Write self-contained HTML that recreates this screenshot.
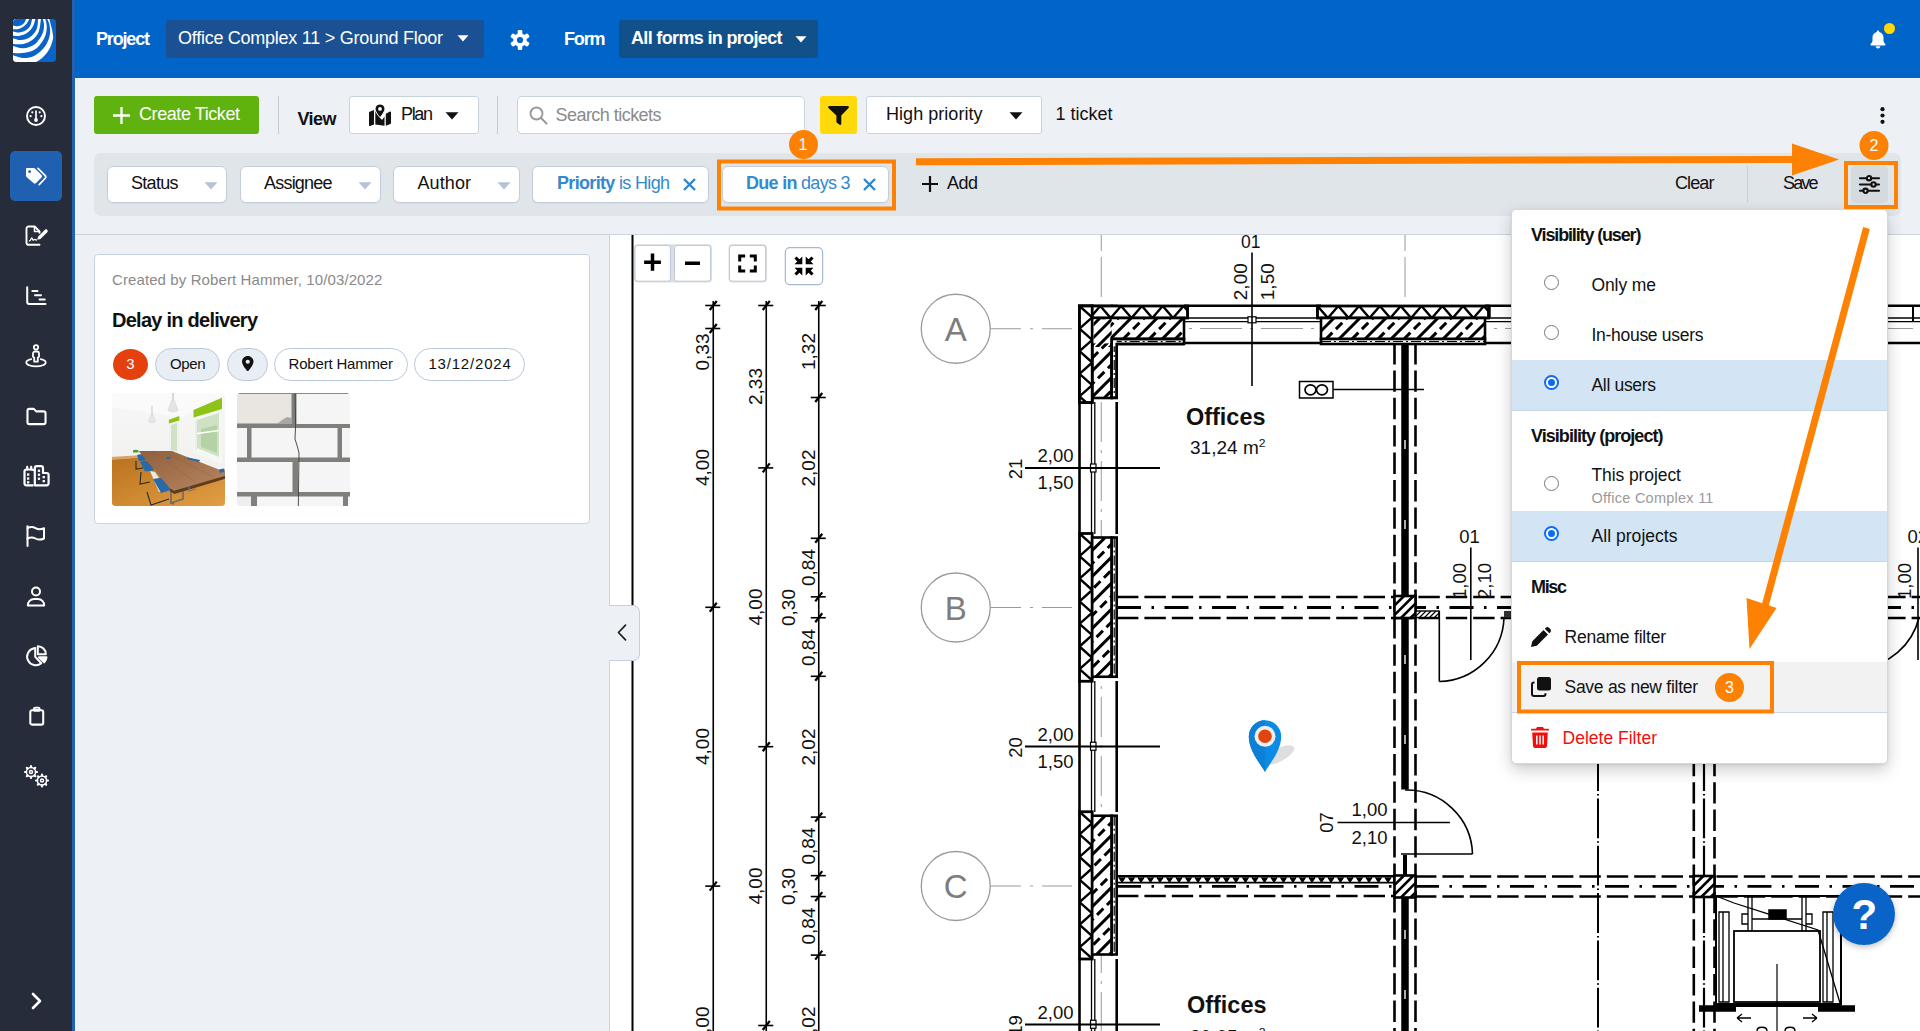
<!DOCTYPE html>
<html lang="en"><head>
<meta charset="utf-8">
<title>Tickets - Office Complex 11</title>
<style>
*{box-sizing:border-box;margin:0;padding:0}
html,body{width:1920px;height:1031px;overflow:hidden;background:#edf1f6}
body{font-family:"Liberation Sans",sans-serif;color:#111;position:relative;font-size:18px}
.abs{position:absolute}
.t{position:absolute;white-space:nowrap;line-height:1;font-size:18px}
.b{font-weight:bold}
svg{position:absolute;overflow:visible}
#sidebar{left:0;top:0;width:75px;height:1031px;background:#262c3a;border-right:3px solid #1f62b6}
#header{left:75px;top:0;width:1845px;height:78px;background:#0064c8}
.hdd{top:20px;height:38px;border-radius:3px}
.btn{background:#fff;border:1px solid #c9d3de;border-radius:3px}
.chip{background:#fff;border:1px solid #c3cedb;border-radius:6px;top:166px;height:37px;box-shadow:0 1px 1px rgba(0,0,0,.04)}
.pill{top:348px;height:33px;border:1px solid #b8c8d9;border-radius:17px;background:#fff}
.or{border:4px solid #fd8204}
.badge{width:29px;height:29px;border-radius:50%;background:#fd8204}
.row{left:1512px;width:375px;height:50px}
.radio{width:15px;height:15px;border-radius:50%;border:1px solid #767676;background:#fff}
.radio.on{border:2px solid #0a6cf5}
.radio.on:after{content:"";position:absolute;left:2px;top:2px;width:7px;height:7px;border-radius:50%;background:#0a6cf5}
</style>
</head>
<body>
<!--SIDEBAR-->
<div id="sidebar" class="abs"></div>
<div class="abs" style="left:10px;top:151px;width:52px;height:50px;border-radius:5px;background:#1f60b0"></div>
<!-- logo -->
<svg style="left:13px;top:19px" width="43" height="43" viewBox="0 0 43 43">
 <defs><clipPath id="lg"><rect x="0" y="0" width="43" height="43" rx="3.500"></rect></clipPath></defs>
 <g clip-path="url(#lg)"><rect width="43" height="43" fill="#0a63c9"></rect>
<path d="M22.57 43.22C25.19 42.01 27.81 40.36 30.13 38.10C32.46 35.84 34.90 32.63 36.53 29.67C38.16 26.71 39.38 22.88 39.91 20.36C40.43 17.84 39.90 16.48 39.67 14.54C39.45 12.60 39.14 11.15 38.57 8.73C38.00 6.30 36.76 1.84 36.24 0.00L36.24 -6L-6 -6L-6 43.22L-6 50L22.57 50Z" fill="#fff"></path>
<path d="M0.00 36.36C2.04 36.91 6.69 39.06 10.35 39.09C14.02 39.12 18.31 38.59 21.99 36.53C25.67 34.48 29.99 30.23 32.46 26.76C34.93 23.29 36.15 19.20 36.82 15.71C37.50 12.22 36.97 8.44 36.53 5.82C36.10 3.20 34.74 1.36 34.21 0.00L34.21 -6L-6 -6L-6 36.36Z" fill="#0a63c9"></path>
<path d="M0.00 34.03C2.23 34.07 7.64 34.63 11.52 33.86C15.40 33.08 19.95 31.87 23.27 29.38C26.59 26.89 29.67 22.35 31.41 18.91C33.16 15.46 33.59 11.88 33.74 8.73C33.90 5.57 32.70 1.84 32.34 0.00L32.34 -6L-6 -6L-6 34.03Z" fill="#fff"></path>
<path d="M0.00 27.05C2.04 27.50 6.71 29.52 10.35 29.20C14.00 28.88 18.69 27.53 21.87 25.13C25.05 22.74 27.91 18.05 29.44 14.83C30.96 11.62 30.94 8.29 31.01 5.82C31.07 3.34 30.13 1.36 29.84 0.00L29.84 -6L-6 -6L-6 27.05Z" fill="#0a63c9"></path>
<path d="M0.00 25.01C2.04 25.07 7.16 25.56 10.35 24.90C13.55 24.24 16.66 23.03 19.20 21.06C21.74 19.09 24.14 16.60 25.60 13.09C27.05 9.58 27.54 2.57 27.92 0.00L27.92 -6L-6 -6L-6 25.01Z" fill="#fff"></path>
<path d="M0.00 19.20C1.65 19.57 5.16 21.27 8.03 21.06C10.90 20.85 14.62 19.73 17.22 17.92C19.82 16.10 22.29 13.17 23.62 10.18C24.95 7.19 24.90 2.08 25.19 0.00L25.19 -6L-6 -6L-6 19.20Z" fill="#0a63c9"></path>
<path d="M0.00 16.87C1.45 16.91 4.54 17.34 6.86 16.87C9.19 16.40 11.81 15.58 13.96 14.08C16.11 12.58 18.39 10.20 19.78 7.85C21.17 5.51 21.82 1.70 22.28 0.00L22.28 -6L-6 -6L-6 16.87Z" fill="#fff"></path>
<path d="M0.00 12.51C1.31 12.70 3.90 13.66 5.99 13.50C8.09 13.33 10.69 12.65 12.57 11.52C14.44 10.38 16.13 8.61 17.22 6.69C18.31 4.77 18.69 1.50 19.08 0.00L19.08 -6L-6 -6L-6 12.51Z" fill="#0a63c9"></path>
<path d="M0.00 10.18C1.16 10.18 3.47 10.36 5.12 10.01C6.77 9.65 8.42 9.00 9.89 8.03C11.36 7.06 12.91 5.53 13.96 4.19C15.01 2.85 15.73 1.09 16.17 0.00L16.17 -6L-6 -6L-6 10.18Z" fill="#fff"></path>
<path d="M0.00 6.52C1.11 6.64 3.32 7.41 4.83 7.27C6.34 7.14 7.91 6.43 9.08 5.70C10.24 4.97 11.16 3.86 11.81 2.91C12.46 1.96 12.68 0.87 12.97 0.00L12.97 -6L-6 -6L-6 6.52Z" fill="#0a63c9"></path>
 </g>
</svg>
<!-- gauge -->
<svg style="left:26px;top:106px" width="20" height="20" viewBox="0 0 20 20" fill="none" stroke="#fff">
 <circle cx="10" cy="10" r="9" stroke-width="1.9"></circle>
 <path d="M10 4.5V14" stroke-width="1.7"></path>
 <circle cx="10" cy="14" r="1.9" fill="#fff" stroke="none"></circle>
 <g fill="#fff" stroke="none"><circle cx="6.3" cy="6.3" r="1.1"></circle><circle cx="13.7" cy="6.3" r="1.1"></circle><circle cx="4.6" cy="10.2" r="1.1"></circle><circle cx="15.4" cy="10.2" r="1.1"></circle></g>
</svg>
<!-- tags -->
<svg style="left:25px;top:166.500px" width="22" height="20" viewBox="0 0 22 20">
 <path d="M1 2.2C1 1.5 1.5 1 2.2 1H8.6c.5 0 1 .2 1.3.5l6.600 6.600c.7.7.7 1.800 0 2.500l-5.500 5.500c-.7.700-1.800.700-2.500 0L1.500 9.900C1.200 9.600 1 9.100 1 8.600z" fill="#fff"></path>
 <circle cx="4.600" cy="4.700" r="1.4" fill="#1f60b0"></circle>
 <path d="M13 1.300l7 7c.9.900.9 2.300 0 3.200l-5.800 6.200" fill="none" stroke="#fff" stroke-width="1.7" stroke-linecap="round"></path>
</svg>
<!-- file signature -->
<svg style="left:25px;top:225px" width="24" height="22" viewBox="0 0 24 22" fill="none" stroke="#fff" stroke-width="1.9" stroke-linejoin="round" stroke-linecap="round">
 <path d="M14.500 19.800H3.500c-1.100 0-2-.9-2-2V3.500c0-1.100.9-2 2-2h6.200l4.800 4.800v1.500"></path>
 <path d="M9.500 1.800v4.700h4.700" stroke-width="1.600"></path>
 <path d="M4.500 15.800c1.200-.2 1.500-2.800 2.300-2.800.8 0 .5 2.200 1.400 2.200.7 0 .8-.9 1.500-.9.500 0 .6.700 1.800.7" stroke-width="1.300"></path>
 <path d="M12.300 14.800l.7-3.100 6.900-6.900c.6-.6 1.600-.6 2.200 0l.2.200c.6.600.6 1.600 0 2.200l-6.900 6.900z" fill="#fff" stroke="none"></path>
</svg>
<!-- gantt -->
<svg style="left:26px;top:286px" width="21" height="20" viewBox="0 0 21 20" fill="none" stroke="#fff" stroke-linecap="round" stroke-linejoin="round">
 <path d="M1.200 1.200v14.800c0 1.100.9 2 2 2h16.300" stroke-width="2"></path>
 <path d="M6.300 5h5.200M9 9.300h6M13.500 13.500h5.300" stroke-width="1.900"></path>
</svg>
<!-- street view -->
<svg style="left:25px;top:344px" width="22" height="24" viewBox="0 0 22 24" fill="none" stroke="#fff" stroke-width="1.800" stroke-linecap="round" stroke-linejoin="round">
 <circle cx="11" cy="3.300" r="2.200"></circle>
 <path d="M8 9.500c0-1.100.9-2 2-2h2c1.100 0 2 .9 2 2v3.300l-1.200.8v4.100h-3.600v-4.100L8 12.800z"></path>
 <path d="M6.200 15.200C3.300 15.900 1.300 17.100 1.300 18.500c0 2.200 4.300 3.900 9.700 3.900s9.700-1.700 9.700-3.900c0-1.400-2-2.600-4.900-3.300"></path>
</svg>
<!-- folder -->
<svg style="left:25.500px;top:406.500px" width="21" height="19" viewBox="0 0 22 20" fill="none" stroke="#fff" stroke-width="2.200" stroke-linejoin="round">
 <path d="M1.500 4c0-1.100.9-2 2-2h4.700l2.500 2.600h7.800c1.100 0 2 .9 2 2v9.400c0 1.100-.9 2-2 2H3.500c-1.100 0-2-.9-2-2z"></path>
</svg>
<!-- buildings -->
<svg style="left:23px;top:465px" width="27" height="22" viewBox="0 0 27 22" fill="none" stroke="#fff" stroke-width="2.200" stroke-linejoin="round">
 <path d="M10.500 20.300H3.500c-1.100 0-2-.9-2-2V6.500c0-1.100.9-2 2-2h5.500c.8 0 1.500.7 1.500 1.500"></path>
 <path d="M4.200 4.500V1.800M8.200 4.500V1.800" stroke-linecap="round"></path>
 <path d="M11.800 20.300V3.200c0-1.100.9-2 2-2h4.200c1.100 0 2 .9 2 2v4.800h3.600c1.100 0 2 .9 2 2v8.300c0 1.100-.9 2-2 2z"></path>
 <g stroke="none" fill="#fff"><rect x="4" y="8.400" width="2.300" height="2.300"></rect><rect x="4" y="12.400" width="2.300" height="2.300"></rect><rect x="4" y="16.200" width="2.300" height="2.300"></rect><rect x="14.800" y="4.600" width="2.300" height="2.300"></rect><rect x="14.800" y="8.600" width="2.300" height="2.300"></rect><rect x="14.800" y="12.600" width="2.300" height="2.300"></rect><rect x="19.600" y="11" width="2.300" height="2.300"></rect><rect x="19.600" y="15" width="2.300" height="2.300"></rect></g>
</svg>
<!-- flag -->
<svg style="left:26px;top:525px" width="20" height="22" viewBox="0 0 20 22" fill="none" stroke="#fff" stroke-width="2" stroke-linecap="round" stroke-linejoin="round">
 <path d="M1.500 1.200V21"></path>
 <path d="M1.500 3.200c3-1.600 5.500-1.400 8 0s5.500 1.400 8.500 0v10.300c-3 1.400-6 1.400-8.500 0s-5-1.600-8 0"></path>
</svg>
<!-- user -->
<svg style="left:26px;top:586px" width="20" height="21" viewBox="0 0 20 21" fill="none" stroke="#fff" stroke-width="2" stroke-linejoin="round">
 <circle cx="10" cy="5.500" r="4"></circle>
 <path d="M1.800 19.500c0-3.600 2.700-6.500 6.200-6.500h4c3.500 0 6.200 2.900 6.200 6.500z"></path>
</svg>
<!-- pie -->
<svg style="left:25px;top:645px" width="23" height="22" viewBox="0 0 23 22" fill="none" stroke="#fff" stroke-width="2" stroke-linejoin="round">
 <path d="M9 3.200A8.600 8.600 0 1 0 16.300 18.200L10.200 11.800V3.100z"></path>
 <path d="M12.800 1.200a8 8 0 0 1 8 8h-8z"></path>
 <path d="M14 12.200h7.500a8 8 0 0 1-2.300 5.200z" fill="#fff"></path>
</svg>
<!-- clipboard -->
<svg style="left:28.500px;top:706px" width="15.500" height="20" viewBox="0 0 18 23" fill="none" stroke="#fff" stroke-width="2" stroke-linejoin="round">
 <rect x="1.500" y="4.800" width="15" height="16.700" rx="2" stroke-width="2.400"></rect>
 <path d="M5.500 4.800V3.500c0-1 .8-1.800 1.800-1.800h3.400c1 0 1.800.8 1.800 1.800v1.300"></path>
 <rect x="5.500" y="3" width="7" height="3.500" fill="#fff" stroke="none"></rect>
</svg>
<!-- gears -->
<svg style="left:23px;top:765px" width="27" height="23" viewBox="0 0 27 23" fill="none" stroke="#fff">
 <g stroke-width="1.500"><circle cx="8" cy="7" r="4.600"></circle><circle cx="8" cy="7" r="1.500"></circle></g>
 <g stroke-width="2.200" stroke-linecap="round"><path d="M8 1v1.200M8 11.800V13M2 7h1.200M12.800 7H14M3.800 2.800l.8.800M11.400 10.400l.8.800M3.800 11.200l.8-.8M11.400 3.600l.8-.8"></path></g>
 <g stroke-width="1.500"><circle cx="19" cy="15.500" r="4.600"></circle><circle cx="19" cy="15.500" r="1.500"></circle></g>
 <g stroke-width="2.200" stroke-linecap="round"><path d="M19 9.500v1.200M19 20.300v1.200M13 15.500h1.200M23.800 15.500H25M14.800 11.300l.8.800M22.400 18.900l.8.800M14.800 19.700l.8-.8M22.400 12.100l.8-.8"></path></g>
</svg>
<!-- chevron -->
<svg style="left:31px;top:992px" width="11" height="18" viewBox="0 0 11 18" fill="none" stroke="#fff" stroke-width="2.600" stroke-linecap="round" stroke-linejoin="round"><path d="M2 2l7 7-7 7"></path></svg>
<!--/SIDEBAR-->
<!--HEADER-->
<div id="header" class="abs"></div>
<span class="t b" style="left: 96px; color: rgb(255, 255, 255); letter-spacing: -1.17px; top: 29.5px;">Project</span>
<div class="abs hdd" style="left:166px;width:318px;background:#1b5193"></div>
<span class="t" style="left: 178px; color: rgb(255, 255, 255); letter-spacing: -0.26px; top: 29px;">Office Complex 11 &gt; Ground Floor</span>
<svg style="left:457px;top:35px" width="12" height="7" viewBox="0 0 12 7"><path d="M.5.300h11L6 6.500z" fill="#fff"></path></svg>
<!-- gear -->
<svg style="left:510px;top:30px" width="20" height="20" viewBox="0 0 20 20">
 <g fill="#fff"><circle cx="10" cy="10" r="6.800"></circle>
 <rect x="7.700" y="0" width="4.600" height="20" rx="1.300"></rect>
 <rect x="7.700" y="0" width="4.600" height="20" rx="1.300" transform="rotate(60 10 10)"></rect><rect x="7.700" y="0" width="4.600" height="20" rx="1.300" transform="rotate(120 10 10)"></rect></g>
 <circle cx="10" cy="10" r="3.100" fill="#0064c8"></circle>
</svg>
<span class="t b" style="left: 564px; color: rgb(255, 255, 255); letter-spacing: -1.17px; top: 29.5px;">Form</span>
<div class="abs hdd" style="left:619px;width:199px;background:#12508a"></div>
<span class="t b" style="left: 631px; color: rgb(255, 255, 255); letter-spacing: -0.66px; top: 28.5px;">All forms in project</span>
<svg style="left:795px;top:36px" width="12" height="7" viewBox="0 0 12 7"><path d="M.5.300h11L6 6.500z" fill="#fff"></path></svg>
<!-- bell -->
<svg style="left:1869px;top:30px" width="18" height="19" viewBox="0 0 18 19">
 <path d="M9 .500c.7 0 1.200.5 1.200 1.200v.4c2.600.6 4.300 2.800 4.300 5.500v2.600c0 1.300.5 2.400 1.400 3.300l.4.400c.5.500.2 1.500-.6 1.500H2.300c-.8 0-1.100-1-.6-1.500l.4-.4c.9-.9 1.400-2 1.400-3.300V7.600c0-2.700 1.700-4.900 4.300-5.500v-.4C7.800 1 8.300.5 9 .5z" fill="#fff"></path>
 <path d="M6.700 16.300h4.600c0 1.300-1 2.200-2.300 2.200s-2.300-.9-2.300-2.200z" fill="#fff"></path>
</svg>
<div class="abs" style="left:1884px;top:23px;width:11px;height:11px;border-radius:50%;background:#ffd70a"></div>
<!--/HEADER-->
<!--TOOLBAR-->
<div class="abs" style="left:75px;top:234px;width:1845px;height:1px;background:#cbd5e0"></div>
<div class="abs" style="left:94px;top:96px;width:165px;height:38px;border-radius:3px;background:#60b30e"></div>
<svg style="left:113px;top:107px" width="17" height="17" viewBox="0 0 17 17"><path d="M8.500 0v17M0 8.500h17" stroke="#fff" stroke-width="2.300"></path></svg>
<span class="t" style="left: 139px; color: rgb(255, 255, 255); letter-spacing: -0.42px; top: 105px;">Create Ticket</span>
<div class="abs" style="left:278px;top:96px;width:1px;height:38px;background:#c3ccd6"></div>
<span class="t b" style="left: 297.5px; letter-spacing: -0.57px; top: 110px;">View</span>
<div class="abs btn" style="left:349px;top:96px;width:130px;height:38px"></div>
<!-- map marked icon -->
<svg style="left:368px;top:104px" width="24" height="22" viewBox="0 0 24 22">
 <path d="M1 8.600c0-.4.200-.8.600-.9L6 6v14.500l-4 1.500c-.5.200-1-.2-1-.7zM7.300 6.500V20.500l9.200 1.300V12.500l-.4.600c-.4.700-.8 1.300-1.200 1.800-.5.700-1.500.7-2 0-.8-1.100-2-2.700-2.800-4.200-.4-.700-.700-1.400-.900-2zM17.800 9.800v12l4.600-1.800c.4-.1.600-.5.600-.9V8.200c0-.5-.5-.9-1-.7z" fill="#111"></path>
 <path d="M12 0C9.200 0 7 2.200 7 4.900c0 2.200 2.900 6.200 4.300 7.900.4.500 1 .5 1.400 0C14.100 11.100 17 7.100 17 4.900 17 2.200 14.800 0 12 0z" fill="#111" stroke="#fff" stroke-width="1"></path>
 <circle cx="12" cy="4.900" r="1.900" fill="#fff"></circle>
</svg>
<span class="t" style="left: 401px; letter-spacing: -1.34px; top: 105px;">Plan</span>
<svg style="left:445px;top:112px" width="14" height="8" viewBox="0 0 14 8"><path d="M.5.300h13L7 7.500z" fill="#111"></path></svg>
<div class="abs" style="left:497px;top:96px;width:1px;height:38px;background:#c3ccd6"></div>
<div class="abs btn" style="left:517px;top:96px;width:288px;height:38px;border-radius:5px"></div>
<svg style="left:529px;top:106px" width="19" height="19" viewBox="0 0 19 19" fill="none" stroke="#999" stroke-width="1.900" stroke-linecap="round"><circle cx="7.500" cy="7.500" r="6"></circle><path d="M12 12l5.500 5.500"></path></svg>
<span class="t" style="left: 555.5px; color: rgb(139, 139, 139); letter-spacing: -0.54px; top: 105.5px;">Search tickets</span>
<div class="abs" style="left:820px;top:96px;width:37px;height:38px;border-radius:3px;background:#ffd90a"></div>
<svg style="left:828px;top:106px" width="21" height="19" viewBox="0 0 21 19"><path d="M1.200 0h18.600c1 0 1.500 1.200.8 1.900l-7.300 7.600v8.300c0 .9-1 1.400-1.700.9l-2.700-2c-.3-.2-.5-.6-.5-.9V9.500L.4 1.900C-.3 1.200.2 0 1.200 0z" fill="#111"></path></svg>
<div class="abs btn" style="left:866px;top:96px;width:176px;height:38px"></div>
<span class="t" style="left: 886px; letter-spacing: 0.04px; top: 105px;">High priority</span>
<svg style="left:1009px;top:112px" width="14" height="8" viewBox="0 0 14 8"><path d="M.5.300h13L7 7.500z" fill="#111"></path></svg>
<span class="t" style="left: 1055.5px; letter-spacing: 0px; top: 105px;">1 ticket</span>
<svg style="left:1880px;top:107px" width="5" height="17" viewBox="0 0 5 17" fill="#111"><circle cx="2.500" cy="2.200" r="2.100"></circle><circle cx="2.500" cy="8.500" r="2.100"></circle><circle cx="2.500" cy="14.800" r="2.100"></circle></svg>
<!--/TOOLBAR-->
<!--FILTERBAR-->
<div class="abs" style="left:94px;top:153px;width:1807px;height:63px;border-radius:7px;background:#e0e5ea"></div>
<div class="abs chip" style="left:107px;width:120px"></div>
<span class="t" style="left: 131px; letter-spacing: -0.71px; top: 174px;">Status</span>
<svg style="left:204px;top:182px" width="14" height="8" viewBox="0 0 14 8"><path d="M.5.300h13L7 7.500z" fill="#b4c3d6"></path></svg>
<div class="abs chip" style="left:240px;width:141px"></div>
<span class="t" style="left: 264px; letter-spacing: -0.79px; top: 174px;">Assignee</span>
<svg style="left:358px;top:182px" width="14" height="8" viewBox="0 0 14 8"><path d="M.5.300h13L7 7.500z" fill="#b4c3d6"></path></svg>
<div class="abs chip" style="left:393px;width:127px"></div>
<span class="t" style="left: 417.5px; letter-spacing: 0.09px; top: 174px;">Author</span>
<svg style="left:497px;top:182px" width="14" height="8" viewBox="0 0 14 8"><path d="M.5.300h13L7 7.500z" fill="#b4c3d6"></path></svg>
<div class="abs chip" style="left:532px;width:177px"></div>
<span class="t" style="left: 557px; color: rgb(51, 137, 205); letter-spacing: -0.67px; top: 174px;"><b>Priority</b> is High</span>
<svg style="left:683px;top:178px" width="13" height="13" viewBox="0 0 13 13"><path d="M1 1l11 11M12 1L1 12" stroke="#2f86cc" stroke-width="2.400"></path></svg>
<div class="abs chip" style="left:722px;width:167px"></div>
<span class="t" style="left: 746px; color: rgb(51, 137, 205); letter-spacing: -0.71px; top: 174px;"><b>Due in</b> days 3</span>
<svg style="left:863px;top:178px" width="13" height="13" viewBox="0 0 13 13"><path d="M1 1l11 11M12 1L1 12" stroke="#2f86cc" stroke-width="2.400"></path></svg>
<svg style="left:922px;top:176px" width="16" height="16" viewBox="0 0 16 16"><path d="M8 0v16M0 8h16" stroke="#111" stroke-width="2.200"></path></svg>
<span class="t" style="left: 947px; letter-spacing: -0.52px; top: 174px;">Add</span>
<span class="t" style="left: 1675px; letter-spacing: -0.88px; top: 174px;">Clear</span>
<div class="abs" style="left:1747px;top:166px;width:1px;height:37px;background:#c7cfd8"></div>
<span class="t" style="left: 1783px; letter-spacing: -1.84px; top: 174px;">Save</span>
<div class="abs" style="left:1851px;top:166px;width:37px;height:37px;border-radius:4px;background:#d5dade"></div>
<!-- sliders icon -->
<svg style="left:1859px;top:175px" width="21" height="19" viewBox="0 0 21 19" fill="none" stroke="#111" stroke-width="2.100" stroke-linecap="round">
 <path d="M1 3.200h6.800M12.300 3.200H20M1 9.500h11.300M16.800 9.500H20M1 15.800h3.300M8.800 15.800H20"></path>
 <circle cx="10" cy="3.200" r="2.200"></circle><circle cx="14.500" cy="9.500" r="2.200"></circle><circle cx="6.500" cy="15.800" r="2.200"></circle>
</svg>
<!--/FILTERBAR-->
<!--CARD-->
<div class="abs" style="left:609px;top:235px;width:1px;height:796px;background:#c9d4e0"></div>
<div class="abs" style="left:94px;top:254px;width:496px;height:270px;background:#fff;border:1px solid #c7d3df;border-radius:4px"></div>
<span class="t" style="left: 112px; font-size: 15px; color: rgb(138, 138, 138); letter-spacing: 0.1px; top: 272px;">Created by Robert Hammer, 10/03/2022</span>
<span class="t b" style="left: 112px; font-size: 20px; letter-spacing: -0.74px; top: 310px;">Delay in delivery</span>
<div class="abs" style="left:113px;top:349px;width:35px;height:31px;border-radius:50%;background:#e5410e"></div>
<span class="t" style="left: 126.3px; font-size: 15px; color: rgb(255, 255, 255); top: 356px;">3</span>
<div class="abs pill" style="left:155px;width:65px;background:#e9eef4"></div>
<span class="t" style="left: 170px; font-size: 15px; letter-spacing: -0.33px; top: 355.7px;">Open</span>
<div class="abs pill" style="left:227px;width:41px;background:#e9eef4"></div>
<svg style="left:242px;top:355.500px" width="11.500" height="15.500" viewBox="0 0 12 16"><path d="M6 0C2.700 0 0 2.600 0 5.900c0 2.600 3.500 7.300 5.100 9.300.5.600 1.300.6 1.800 0C8.500 13.200 12 8.500 12 5.900 12 2.600 9.300 0 6 0z" fill="#111"></path><circle cx="6" cy="5.900" r="2.200" fill="#e9eef4"></circle></svg>
<div class="abs pill" style="left:274px;width:134px"></div>
<span class="t" style="left: 288.5px; font-size: 15px; letter-spacing: -0.18px; top: 355.7px;">Robert Hammer</span>
<div class="abs pill" style="left:413.500px;width:111px"></div>
<span class="t" style="left: 428.4px; font-size: 15px; letter-spacing: 0.82px; top: 355.7px;">13/12/2024</span>
<!-- photo 1 -->
<svg style="left:112px;top:393px" width="113" height="113" viewBox="0 0 113 113">
 <defs><clipPath id="ph"><rect width="113" height="113" rx="3.500"></rect></clipPath>
 <filter id="bl" x="-5%" y="-5%" width="110%" height="110%"><feGaussianBlur stdDeviation=".450"></feGaussianBlur></filter>
 <linearGradient id="fl" x1="0" y1="0" x2="1" y2="1"><stop offset="0" stop-color="#b9701f"></stop><stop offset=".500" stop-color="#cf8a30"></stop><stop offset="1" stop-color="#e3a047"></stop></linearGradient>
 <linearGradient id="tb" x1="0" y1="0" x2="1" y2="1"><stop offset="0" stop-color="#8f5f3c"></stop><stop offset="1" stop-color="#b98761"></stop></linearGradient>
 <linearGradient id="wl" x1="0" y1="0" x2="0" y2="1"><stop offset="0" stop-color="#f7f7f7"></stop><stop offset="1" stop-color="#eeeeec"></stop></linearGradient></defs>
 <g clip-path="url(#ph)"><g filter="url(#bl)">
  <rect x="-3" y="-3" width="119" height="119" fill="url(#wl)"></rect>
  <path d="M-3 14L70 24 116-2V-3H-3z" fill="#fafafa"></path>
  <path d="M-3 66.500L27 64.500 58 66 116 88V116H-3z" fill="url(#fl)"></path>
  <path d="M-3 64L27 62.300V64.700L-3 67z" fill="#d5a468"></path>
  <path d="M98 82l18 8v-5l-18-7z" fill="#d5a468"></path>
  <path d="M81.500 24l28.500-9v56l-28.500-12z" fill="#f4f7f2"></path>
  <path d="M85 27l22-7v44L85 55z" fill="#cfe2c6"></path><path d="M89 36l16-4v28l-16-6z" fill="#b4d2a6"></path>
  <path d="M85 40.500l22-3" stroke="#fff" stroke-width="1.300"></path><path d="M84 27v30" stroke="#e9ece8" stroke-width="2"></path>
  <path d="M81.500 17L110 4.700V16L81.500 24.400z" fill="#8bc419"></path>
  <path d="M57 31l10-3.500v33L57 59z" fill="#eef2ec"></path><path d="M59 32l6-2v28l-6-1z" fill="#cfe2c6"></path>
  <path d="M56.900 26.800L67.300 23v4.400L56.900 30.500z" fill="#8bc419"></path>
  <path d="M61 -2V8" stroke="#999" stroke-width=".700"></path><path d="M59.500 7.500h3l3.500 9.500c0 2.500-10 2.500-10 0z" fill="#e4e4e4" stroke="#cfcfcf" stroke-width=".400"></path>
  <path d="M40 13v9" stroke="#aaa" stroke-width=".600"></path><path d="M39 21.500h2l2.500 7c0 1.500-7 1.500-7 0z" fill="#e6e6e6" stroke="#d2d2d2" stroke-width=".400"></path>
  <path d="M21 57.500c1.500-1 4-1 5.500 0v2h-5.500z" fill="#4f9a2a"></path>
  <path d="M25 62c2-1 6-1 8 .5l1 5-7 .5zM28 69c3-1.500 8-1.500 11 .5l3 8-9 1z" fill="#2c69a8"></path>
  <path d="M38 78l5 1 12 18-8 2z" fill="#e9e9e6"></path><path d="M41 86l12-2 10 12-14 4z" fill="#2c69a8"></path>
  <path d="M24 68v8l7-1M29 79l-1 12 10-2M35 99l4 13 18-6" stroke="#2a2a2a" stroke-width="1.100" fill="none"></path>
  <path d="M26.700 58H60L116 80.200V82L62 97.800 58 95.500z" fill="url(#tb)"></path>
  <path d="M58 95.500l4 2.300L116 82v3L62.500 101 58 98.500z" fill="#5e3b22"></path>
  <path d="M40 58l42 30M50 58l52 26" stroke="#8a5a38" stroke-width=".500" opacity=".600"></path>
  <path d="M59 99v11l12-4v-8M59 110l3 1" stroke="#6a6a6a" stroke-width="1.600" fill="none"></path>
  <path d="M77 93v5l7-2" stroke="#777" stroke-width="1.200" fill="none"></path>
  <path d="M54 64.500c1.500-1 4-.800 5 0l-.500 1.500h-4z" fill="#2d6c9e"></path>
  <path d="M76 64.500l12 2.500-1 2-12-3zM107 76.500l5-1 1 3-5 1.500z" fill="#2c69a8"></path>
 </g></g>
</svg>
<!-- photo 2 -->
<svg style="left:237px;top:393px" width="113" height="113" viewBox="0 0 113 113">
 <defs><filter id="bl2" x="-5%" y="-5%" width="110%" height="110%"><feGaussianBlur stdDeviation=".300"></feGaussianBlur></filter></defs>
 <g clip-path="url(#ph)"><g filter="url(#bl2)">
  <rect x="-3" y="-3" width="119" height="119" fill="#7f7f7b"></rect>
  <g fill="#f5f5f5">
   <rect x="-3" y="1" width="57.500" height="29.500" fill="#e9e6e1"></rect><rect x="59.500" y="1" width="57" height="30"></rect>
   <rect x="-3" y="35" width="13" height="29.500"></rect><rect x="14.500" y="35" width="86" height="29.500"></rect><rect x="105" y="35" width="11" height="29.500"></rect>
   <rect x="-3" y="69" width="58.500" height="30"></rect><rect x="61" y="69" width="55" height="30"></rect>
   <rect x="-3" y="103.500" width="17" height="12" fill="#eee"></rect><rect x="20" y="103.500" width="86" height="12"></rect><rect x="111" y="103.500" width="5" height="12"></rect>
  </g>
  <path d="M45 27l5-3 5 1v6H40z" fill="#a9a8a4"></path>
  <path d="M-3 0h119" stroke="#8d8d89" stroke-width="1.500"></path>
  <path d="M58 -1l.600 33.500L58 46l2.500 8 1.500 6-.700 53" stroke="#3c3c3c" stroke-width=".900" fill="none"></path>
 </g></g>
</svg>
<!--/CARD-->
<!--PLAN-->
<svg style="left:0;top:0" width="1920" height="1031" viewBox="0 0 1920 1031" fill="none" font-family="Liberation Sans, sans-serif">
<defs><clipPath id="pc"><rect x="610" y="235" width="1310" height="796"></rect></clipPath></defs>
<rect x="610" y="235" width="1310" height="796" fill="#fff"></rect>
<g clip-path="url(#pc)">
<path d="M632.5 235L632.5 1031" stroke="#000" stroke-width="2"></path>
<path d="M713.25 301L713.25 1031" stroke="#000" stroke-width="1.6"></path>
<path d="M705.25 305.5L720.25 305.5" stroke="#000" stroke-width="1.6"></path>
<path d="M709.75 310L716.75 301" stroke="#000" stroke-width="2.2"></path>
<path d="M705.25 328.5L720.25 328.5" stroke="#000" stroke-width="1.6"></path>
<path d="M709.75 333L716.75 324" stroke="#000" stroke-width="2.2"></path>
<path d="M705.25 607.3L720.25 607.3" stroke="#000" stroke-width="1.6"></path>
<path d="M709.75 611.8L716.75 602.8" stroke="#000" stroke-width="2.2"></path>
<path d="M705.25 886.1L720.25 886.1" stroke="#000" stroke-width="1.6"></path>
<path d="M709.75 890.6L716.75 881.6" stroke="#000" stroke-width="2.2"></path>
<path d="M766.25 301L766.25 1031" stroke="#000" stroke-width="1.6"></path>
<path d="M758.25 305.5L773.25 305.5" stroke="#000" stroke-width="1.6"></path>
<path d="M762.75 310L769.75 301" stroke="#000" stroke-width="2.2"></path>
<path d="M758.25 467.9L773.25 467.9" stroke="#000" stroke-width="1.6"></path>
<path d="M762.75 472.4L769.75 463.4" stroke="#000" stroke-width="2.2"></path>
<path d="M758.25 746.7L773.25 746.7" stroke="#000" stroke-width="1.6"></path>
<path d="M762.75 751.2L769.75 742.2" stroke="#000" stroke-width="2.2"></path>
<path d="M758.25 1025.5L773.25 1025.5" stroke="#000" stroke-width="1.6"></path>
<path d="M762.75 1030L769.75 1021" stroke="#000" stroke-width="2.2"></path>
<path d="M818.75 301L818.75 1031" stroke="#000" stroke-width="1.6"></path>
<path d="M810.75 305.5L825.75 305.5" stroke="#000" stroke-width="1.6"></path>
<path d="M815.25 310L822.25 301" stroke="#000" stroke-width="2.2"></path>
<path d="M810.75 397.5L825.75 397.5" stroke="#000" stroke-width="1.6"></path>
<path d="M815.25 402L822.25 393" stroke="#000" stroke-width="2.2"></path>
<path d="M810.75 538.3L825.75 538.3" stroke="#000" stroke-width="1.6"></path>
<path d="M815.25 542.8L822.25 533.8" stroke="#000" stroke-width="2.2"></path>
<path d="M810.75 596.85L825.75 596.85" stroke="#000" stroke-width="1.6"></path>
<path d="M815.25 601.35L822.25 592.35" stroke="#000" stroke-width="2.2"></path>
<path d="M810.75 617.76L825.75 617.76" stroke="#000" stroke-width="1.6"></path>
<path d="M815.25 622.26L822.25 613.26" stroke="#000" stroke-width="2.2"></path>
<path d="M810.75 676.3L825.75 676.3" stroke="#000" stroke-width="1.6"></path>
<path d="M815.25 680.8L822.25 671.8" stroke="#000" stroke-width="2.2"></path>
<path d="M810.75 817.1L825.75 817.1" stroke="#000" stroke-width="1.6"></path>
<path d="M815.25 821.6L822.25 812.6" stroke="#000" stroke-width="2.2"></path>
<path d="M810.75 875.65L825.75 875.65" stroke="#000" stroke-width="1.6"></path>
<path d="M815.25 880.15L822.25 871.15" stroke="#000" stroke-width="2.2"></path>
<path d="M810.75 896.56L825.75 896.56" stroke="#000" stroke-width="1.6"></path>
<path d="M815.25 901.06L822.25 892.06" stroke="#000" stroke-width="2.2"></path>
<path d="M810.75 955.1L825.75 955.1" stroke="#000" stroke-width="1.6"></path>
<path d="M815.25 959.6L822.25 950.6" stroke="#000" stroke-width="2.2"></path>
<path d="M810.75 1095.9L825.75 1095.9" stroke="#000" stroke-width="1.6"></path>
<path d="M815.25 1100.4L822.25 1091.4" stroke="#000" stroke-width="2.2"></path>
<text x="709" y="352" font-size="19" text-anchor="middle" fill="#111" transform="rotate(-90 709 352)">0,33</text>
<text x="709" y="467.5" font-size="19" text-anchor="middle" fill="#111" transform="rotate(-90 709 467.5)">4,00</text>
<text x="709" y="746.5" font-size="19" text-anchor="middle" fill="#111" transform="rotate(-90 709 746.5)">4,00</text>
<text x="709" y="1025" font-size="19" text-anchor="middle" fill="#111" transform="rotate(-90 709 1025)">4,00</text>
<text x="762" y="386.5" font-size="19" text-anchor="middle" fill="#111" transform="rotate(-90 762 386.5)">2,33</text>
<text x="762" y="607" font-size="19" text-anchor="middle" fill="#111" transform="rotate(-90 762 607)">4,00</text>
<text x="762" y="886" font-size="19" text-anchor="middle" fill="#111" transform="rotate(-90 762 886)">4,00</text>
<text x="814.5" y="351.5" font-size="19" text-anchor="middle" fill="#111" transform="rotate(-90 814.5 351.5)">1,32</text>
<text x="814.5" y="468" font-size="19" text-anchor="middle" fill="#111" transform="rotate(-90 814.5 468)">2,02</text>
<text x="814.5" y="567.5" font-size="19" text-anchor="middle" fill="#111" transform="rotate(-90 814.5 567.5)">0,84</text>
<text x="795" y="607.5" font-size="19" text-anchor="middle" fill="#111" transform="rotate(-90 795 607.5)">0,30</text>
<text x="814.5" y="647.5" font-size="19" text-anchor="middle" fill="#111" transform="rotate(-90 814.5 647.5)">0,84</text>
<text x="814.5" y="747" font-size="19" text-anchor="middle" fill="#111" transform="rotate(-90 814.5 747)">2,02</text>
<text x="814.5" y="846" font-size="19" text-anchor="middle" fill="#111" transform="rotate(-90 814.5 846)">0,84</text>
<text x="795" y="886.5" font-size="19" text-anchor="middle" fill="#111" transform="rotate(-90 795 886.5)">0,30</text>
<text x="814.5" y="926" font-size="19" text-anchor="middle" fill="#111" transform="rotate(-90 814.5 926)">0,84</text>
<text x="814.5" y="1025" font-size="19" text-anchor="middle" fill="#111" transform="rotate(-90 814.5 1025)">2,02</text>
<circle cx="955.75" cy="328.75" r="34.5" stroke="#9a9a9a" stroke-width="1.3" fill="#fff"></circle>
<text x="955.75" y="340.75" font-size="33" text-anchor="middle" fill="#7d7d7d">A</text>
<path d="M991 328.75L1078 328.75" stroke="#9a9a9a" stroke-width="1" stroke-dasharray="30 9 3 9"></path>
<circle cx="955.75" cy="607.5" r="34.5" stroke="#9a9a9a" stroke-width="1.3" fill="#fff"></circle>
<text x="955.75" y="619.5" font-size="33" text-anchor="middle" fill="#7d7d7d">B</text>
<path d="M991 607.5L1078 607.5" stroke="#9a9a9a" stroke-width="1" stroke-dasharray="30 9 3 9"></path>
<circle cx="955.75" cy="886" r="34.5" stroke="#9a9a9a" stroke-width="1.3" fill="#fff"></circle>
<text x="955.75" y="898" font-size="33" text-anchor="middle" fill="#7d7d7d">C</text>
<path d="M991 886L1078 886" stroke="#9a9a9a" stroke-width="1" stroke-dasharray="30 9 3 9"></path>
<path d="M1078 328.5L1920 328.5" stroke="#9a9a9a" stroke-width="1" stroke-dasharray="42 8 3 8"></path>
<path d="M1101.25 235L1101.25 306" stroke="#9a9a9a" stroke-width="1" stroke-dasharray="16 6 40 8 3 8"></path>
<path d="M1405 235L1405 306" stroke="#9a9a9a" stroke-width="1" stroke-dasharray="16 6 40 8 3 8"></path>
<path d="M1101.25 402L1101.25 1031" stroke="#9a9a9a" stroke-width="1" stroke-dasharray="40 8 3 8"></path>
<path d="M1079.5 402L1079.5 534" stroke="#000" stroke-width="2.6"></path>
<path d="M1091.5 402L1091.5 534" stroke="#000" stroke-width="1.3"></path>
<path d="M1094.8 402L1094.8 534" stroke="#000" stroke-width="1.3"></path>
<path d="M1116.7 402L1116.7 534" stroke="#000" stroke-width="2.6"></path>
<path d="M1079.5 681L1079.5 812" stroke="#000" stroke-width="2.6"></path>
<path d="M1091.5 681L1091.5 812" stroke="#000" stroke-width="1.3"></path>
<path d="M1094.8 681L1094.8 812" stroke="#000" stroke-width="1.3"></path>
<path d="M1116.7 681L1116.7 812" stroke="#000" stroke-width="2.6"></path>
<path d="M1079.5 959L1079.5 1040" stroke="#000" stroke-width="2.6"></path>
<path d="M1091.5 959L1091.5 1040" stroke="#000" stroke-width="1.3"></path>
<path d="M1094.8 959L1094.8 1040" stroke="#000" stroke-width="1.3"></path>
<path d="M1116.7 959L1116.7 1040" stroke="#000" stroke-width="2.6"></path>
<rect x="1090.5" y="464" width="5.5" height="8" fill="#fff" stroke="#000" stroke-width="1.2"></rect>
<rect x="1090.5" y="742.25" width="5.5" height="8" fill="#fff" stroke="#000" stroke-width="1.2"></rect>
<rect x="1090.5" y="1020.25" width="5.5" height="8" fill="#fff" stroke="#000" stroke-width="1.2"></rect>
<path d="M1184 305.7L1321 305.7" stroke="#000" stroke-width="2.4"></path>
<path d="M1184 318L1321 318" stroke="#000" stroke-width="1.3"></path>
<path d="M1184 321.6L1321 321.6" stroke="#000" stroke-width="1.3"></path>
<path d="M1184 343L1321 343" stroke="#000" stroke-width="2.6"></path>
<path d="M1485 305.7L1920 305.7" stroke="#000" stroke-width="2.4"></path>
<path d="M1485 318L1920 318" stroke="#000" stroke-width="1.3"></path>
<path d="M1485 321.6L1920 321.6" stroke="#000" stroke-width="1.3"></path>
<path d="M1485 343L1920 343" stroke="#000" stroke-width="2.6"></path>
<rect x="1248" y="316.800" width="8" height="6" fill="#fff" stroke="#000" stroke-width="1.2"></rect>
<path d="M1187.5 306L1187.5 318" stroke="#000" stroke-width="2.4"></path>
<path d="M1317.5 306L1317.5 318" stroke="#000" stroke-width="2.4"></path>
<path d="M1489.5 306L1489.5 318" stroke="#000" stroke-width="2.4"></path>
<path d="M1913 306L1913 321" stroke="#000" stroke-width="2"></path>
<rect x="1079.5" y="306" width="12.7" height="96.5" fill="#fff"></rect>
<clipPath id="c1"><rect x="1079.5" y="306" width="12.7" height="96.5"></rect></clipPath><g clip-path="url(#c1)">
<path d="M1079.5 306L1092.2 317.3L1079.5 328.6L1092.2 339.9L1079.5 351.2L1092.2 362.5L1079.5 373.8L1092.2 385.1L1079.5 396.4L1092.2 407.7L1079.5 419" stroke="#000" stroke-width="2.4" stroke-linejoin="miter"></path>
</g>
<rect x="1079.5" y="306" width="12.7" height="96.5" stroke="#000" stroke-width="2.8"></rect>
<rect x="1092.2" y="306" width="19.5" height="92" fill="#fff"></rect>
<clipPath id="c2"><rect x="1092.2" y="306" width="19.5" height="92"></rect></clipPath><g clip-path="url(#c2)">
<path d="M987.2 398L1079.2 306M1013.2 398L1105.2 306M1039.2 398L1131.2 306M1065.2 398L1157.2 306M1091.2 398L1183.2 306M1117.2 398L1209.2 306" stroke="#000" stroke-width="3"></path>
<path d="M1000.2 398L1092.2 306M1026.2 398L1118.2 306M1052.2 398L1144.2 306M1078.2 398L1170.2 306M1104.2 398L1196.2 306" stroke="#000" stroke-width="3" stroke-dasharray="9 5"></path>
</g>
<rect x="1092.2" y="306" width="19.5" height="92" stroke="#000" stroke-width="2.6"></rect>
<rect x="1111.700" y="306" width="5" height="92" fill="#fff" stroke="#000" stroke-width="2.600"></rect>
<path d="M1114.2 306L1114.2 398" stroke="#000" stroke-width="1.2" stroke-dasharray="10 3 2 3"></path>
<rect x="1079.5" y="533.5" width="12.7" height="147.75" fill="#fff"></rect>
<clipPath id="c3"><rect x="1079.5" y="533.5" width="12.7" height="147.75"></rect></clipPath><g clip-path="url(#c3)">
<path d="M1079.5 533.5L1092.2 544.8L1079.5 556.1L1092.2 567.4L1079.5 578.7L1092.2 590L1079.5 601.3L1092.2 612.6L1079.5 623.9L1092.2 635.2L1079.5 646.5L1092.2 657.8L1079.5 669.1L1092.2 680.4L1079.5 691.7L1092.2 703" stroke="#000" stroke-width="2.4" stroke-linejoin="miter"></path>
</g>
<rect x="1079.5" y="533.5" width="12.7" height="147.75" stroke="#000" stroke-width="2.8"></rect>
<rect x="1092.2" y="537.5" width="19.5" height="139.25" fill="#fff"></rect>
<clipPath id="c4"><rect x="1092.2" y="537.5" width="19.5" height="139.25"></rect></clipPath><g clip-path="url(#c4)">
<path d="M939.95 676.75L1079.2 537.5M965.95 676.75L1105.2 537.5M991.95 676.75L1131.2 537.5M1017.95 676.75L1157.2 537.5M1043.95 676.75L1183.2 537.5M1069.95 676.75L1209.2 537.5M1095.95 676.75L1235.2 537.5M1121.95 676.75L1261.2 537.5" stroke="#000" stroke-width="3"></path>
<path d="M952.95 676.75L1092.2 537.5M978.95 676.75L1118.2 537.5M1004.95 676.75L1144.2 537.5M1030.95 676.75L1170.2 537.5M1056.95 676.75L1196.2 537.5M1082.95 676.75L1222.2 537.5M1108.95 676.75L1248.2 537.5" stroke="#000" stroke-width="3" stroke-dasharray="9 5"></path>
</g>
<rect x="1092.2" y="537.5" width="19.5" height="139.25" stroke="#000" stroke-width="2.6"></rect>
<rect x="1111.700" y="537.5" width="5" height="139.25" fill="#fff" stroke="#000" stroke-width="2.600"></rect>
<path d="M1114.2 537.5L1114.2 676.75" stroke="#000" stroke-width="1.2" stroke-dasharray="10 3 2 3"></path>
<rect x="1079.5" y="811.75" width="12.7" height="147.25" fill="#fff"></rect>
<clipPath id="c5"><rect x="1079.5" y="811.75" width="12.7" height="147.25"></rect></clipPath><g clip-path="url(#c5)">
<path d="M1079.5 811.75L1092.2 823.05L1079.5 834.35L1092.2 845.65L1079.5 856.95L1092.2 868.25L1079.5 879.55L1092.2 890.85L1079.5 902.15L1092.2 913.45L1079.5 924.75L1092.2 936.05L1079.5 947.35L1092.2 958.65L1079.5 969.95L1092.2 981.25" stroke="#000" stroke-width="2.4" stroke-linejoin="miter"></path>
</g>
<rect x="1079.5" y="811.75" width="12.7" height="147.25" stroke="#000" stroke-width="2.8"></rect>
<rect x="1092.2" y="815.75" width="19.5" height="138.75" fill="#fff"></rect>
<clipPath id="c6"><rect x="1092.2" y="815.75" width="19.5" height="138.75"></rect></clipPath><g clip-path="url(#c6)">
<path d="M940.45 954.5L1079.2 815.75M966.45 954.5L1105.2 815.75M992.45 954.5L1131.2 815.75M1018.45 954.5L1157.2 815.75M1044.45 954.5L1183.2 815.75M1070.45 954.5L1209.2 815.75M1096.45 954.5L1235.2 815.75M1122.45 954.5L1261.2 815.75" stroke="#000" stroke-width="3"></path>
<path d="M953.45 954.5L1092.2 815.75M979.45 954.5L1118.2 815.75M1005.45 954.5L1144.2 815.75M1031.45 954.5L1170.2 815.75M1057.45 954.5L1196.2 815.75M1083.45 954.5L1222.2 815.75M1109.45 954.5L1248.2 815.75" stroke="#000" stroke-width="3" stroke-dasharray="9 5"></path>
</g>
<rect x="1092.2" y="815.75" width="19.5" height="138.75" stroke="#000" stroke-width="2.6"></rect>
<rect x="1111.700" y="815.75" width="5" height="138.75" fill="#fff" stroke="#000" stroke-width="2.600"></rect>
<path d="M1114.2 815.75L1114.2 954.5" stroke="#000" stroke-width="1.2" stroke-dasharray="10 3 2 3"></path>
<rect x="1079.5" y="306" width="108" height="12" fill="#fff"></rect>
<clipPath id="c7"><rect x="1079.5" y="306" width="108" height="12"></rect></clipPath><g clip-path="url(#c7)">
<path d="M1079.5 306L1089.9 318L1100.3 306L1110.7 318L1121.1 306L1131.5 318L1141.9 306L1152.3 318L1162.7 306L1173.1 318L1183.5 306L1193.9 318L1204.3 306" stroke="#000" stroke-width="2.4"></path>
</g>
<rect x="1079.5" y="306" width="108" height="12" stroke="#000" stroke-width="2.8"></rect>
<rect x="1092.2" y="318" width="91.8" height="21" fill="#fff"></rect>
<clipPath id="c8"><rect x="1092.2" y="318" width="91.8" height="21"></rect></clipPath><g clip-path="url(#c8)">
<path d="M1058.2 339L1079.2 318M1084.2 339L1105.2 318M1110.2 339L1131.2 318M1136.2 339L1157.2 318M1162.2 339L1183.2 318M1188.2 339L1209.2 318" stroke="#000" stroke-width="3"></path>
<path d="M1071.2 339L1092.2 318M1097.2 339L1118.2 318M1123.2 339L1144.2 318M1149.2 339L1170.2 318M1175.2 339L1196.2 318" stroke="#000" stroke-width="3" stroke-dasharray="9 5"></path>
</g>
<rect x="1092.2" y="318" width="91.8" height="21" stroke="#000" stroke-width="2.6"></rect>
<rect x="1111.7" y="339" width="72.3" height="5" fill="#fff" stroke="#000" stroke-width="2.600"></rect>
<path d="M1111.7 341.5L1184 341.5" stroke="#000" stroke-width="1.2" stroke-dasharray="10 3 2 3"></path>
<rect x="1317.5" y="306" width="171" height="12" fill="#fff"></rect>
<clipPath id="c9"><rect x="1317.5" y="306" width="171" height="12"></rect></clipPath><g clip-path="url(#c9)">
<path d="M1317.5 306L1327.9 318L1338.3 306L1348.7 318L1359.1 306L1369.5 318L1379.9 306L1390.3 318L1400.7 306L1411.1 318L1421.5 306L1431.9 318L1442.3 306L1452.7 318L1463.1 306L1473.5 318L1483.9 306L1494.3 318L1504.7 306" stroke="#000" stroke-width="2.4"></path>
</g>
<rect x="1317.5" y="306" width="171" height="12" stroke="#000" stroke-width="2.8"></rect>
<rect x="1321" y="318" width="164" height="21" fill="#fff"></rect>
<clipPath id="c10"><rect x="1321" y="318" width="164" height="21"></rect></clipPath><g clip-path="url(#c10)">
<path d="M1287 339L1308 318M1313 339L1334 318M1339 339L1360 318M1365 339L1386 318M1391 339L1412 318M1417 339L1438 318M1443 339L1464 318M1469 339L1490 318M1495 339L1516 318" stroke="#000" stroke-width="3"></path>
<path d="M1300 339L1321 318M1326 339L1347 318M1352 339L1373 318M1378 339L1399 318M1404 339L1425 318M1430 339L1451 318M1456 339L1477 318M1482 339L1503 318" stroke="#000" stroke-width="3" stroke-dasharray="9 5"></path>
</g>
<rect x="1321" y="318" width="164" height="21" stroke="#000" stroke-width="2.6"></rect>
<rect x="1321" y="339" width="164" height="5" fill="#fff" stroke="#000" stroke-width="2.600"></rect>
<path d="M1321 341.5L1485 341.5" stroke="#000" stroke-width="1.2" stroke-dasharray="10 3 2 3"></path>
<rect x="1079.5" y="306" width="12.7" height="96.5" fill="#fff"></rect>
<clipPath id="c11"><rect x="1079.5" y="306" width="12.7" height="96.5"></rect></clipPath><g clip-path="url(#c11)">
<path d="M1079.5 306L1092.2 317.3L1079.5 328.6L1092.2 339.9L1079.5 351.2L1092.2 362.5L1079.5 373.8L1092.2 385.1L1079.5 396.4L1092.2 407.7L1079.5 419" stroke="#000" stroke-width="2.4" stroke-linejoin="miter"></path>
</g>
<rect x="1079.5" y="306" width="12.7" height="96.5" stroke="#000" stroke-width="2.8"></rect>
<rect x="1093.500" y="319.400" width="17" height="24" fill="#fff"></rect>
<clipPath id="c12"><rect x="1093.5" y="317" width="18.2" height="30"></rect></clipPath><g clip-path="url(#c12)">
<path d="M990 402L1074 318M1003 402L1087 318M1016 402L1100 318M1029 402L1113 318M1042 402L1126 318M1055 402L1139 318M1068 402L1152 318M1081 402L1165 318M1094 402L1178 318M1107 402L1191 318M1120 402L1204 318M1133 402L1217 318" stroke="#000" stroke-width="3"></path>
</g>
<rect x="1113" y="340.300" width="3.700" height="6" fill="#fff"></rect>
<path d="M1111.700 398V339H1184M1116.700 398V344H1184" stroke="#000" stroke-width="2.600"></path>
<path d="M1394.5 343L1394.5 1031" stroke="#000" stroke-width="2.6" stroke-dasharray="21.4 6"></path>
<path d="M1415.5 343L1415.5 1031" stroke="#000" stroke-width="2.6" stroke-dasharray="21.4 6"></path>
<path d="M1405 343L1405 789.5" stroke="#000" stroke-width="7.5"></path>
<path d="M1405 855L1405 875" stroke="#000" stroke-width="4"></path>
<path d="M1405 897L1405 1031" stroke="#000" stroke-width="7.5"></path>
<path d="M1405 440L1405 449" stroke="#ddd" stroke-width="1.6"></path>
<path d="M1405 520L1405 529" stroke="#ddd" stroke-width="1.6"></path>
<path d="M1405 655L1405 664" stroke="#ddd" stroke-width="1.6"></path>
<path d="M1405 735L1405 744" stroke="#ddd" stroke-width="1.6"></path>
<path d="M1405 930L1405 939" stroke="#ddd" stroke-width="1.6"></path>
<path d="M1405 990L1405 999" stroke="#ddd" stroke-width="1.6"></path>
<path d="M1117 597L1920 597" stroke="#000" stroke-width="2.6" stroke-dasharray="21.4 6"></path>
<path d="M1117 618L1920 618" stroke="#000" stroke-width="2.6" stroke-dasharray="21.4 6"></path>
<path d="M1117 607.5L1920 607.5" stroke="#000" stroke-width="2.8" stroke-dasharray="24 10.5 2.5 10.5"></path>
<rect x="1394.5" y="596" width="21" height="22" fill="#fff"></rect>
<clipPath id="c13"><rect x="1394.5" y="596" width="21" height="22"></rect></clipPath><g clip-path="url(#c13)">
<path d="M1363 618L1385 596M1372.5 618L1394.5 596M1382 618L1404 596M1391.5 618L1413.5 596M1401 618L1423 596M1410.5 618L1432.5 596M1420 618L1442 596" stroke="#000" stroke-width="2.6"></path>
</g>
<rect x="1394.5" y="596" width="21" height="22" stroke="#000" stroke-width="2.6"></rect>
<path d="M1117 876.2L1394 876.2" stroke="#000" stroke-width="2.6"></path>
<path d="M1117 882.6L1394 882.6" stroke="#000" stroke-width="1.6"></path>
<path d="M1119 877.5L1122 882L1125 877.5M1128.5 877.5L1131.5 882L1134.5 877.5M1138 877.5L1141 882L1144 877.5M1147.5 877.5L1150.5 882L1153.5 877.5M1157 877.5L1160 882L1163 877.5M1166.5 877.5L1169.5 882L1172.5 877.5M1176 877.5L1179 882L1182 877.5M1185.5 877.5L1188.5 882L1191.5 877.5M1195 877.5L1198 882L1201 877.5M1204.5 877.5L1207.5 882L1210.5 877.5M1214 877.5L1217 882L1220 877.5M1223.5 877.5L1226.5 882L1229.5 877.5M1233 877.5L1236 882L1239 877.5M1242.5 877.5L1245.5 882L1248.5 877.5M1252 877.5L1255 882L1258 877.5M1261.5 877.5L1264.5 882L1267.5 877.5M1271 877.5L1274 882L1277 877.5M1280.5 877.5L1283.5 882L1286.5 877.5M1290 877.5L1293 882L1296 877.5M1299.5 877.5L1302.5 882L1305.5 877.5M1309 877.5L1312 882L1315 877.5M1318.5 877.5L1321.5 882L1324.5 877.5M1328 877.5L1331 882L1334 877.5M1337.5 877.5L1340.5 882L1343.5 877.5M1347 877.5L1350 882L1353 877.5M1356.5 877.5L1359.5 882L1362.5 877.5M1366 877.5L1369 882L1372 877.5M1375.5 877.5L1378.5 882L1381.5 877.5M1385 877.5L1388 882L1391 877.5" stroke="#000" stroke-width="1.3" fill="#000"></path>
<path d="M1117 886.3L1394 886.3" stroke="#000" stroke-width="2.8" stroke-dasharray="24 10.5 2.5 10.5"></path>
<path d="M1117 896L1394 896" stroke="#000" stroke-width="2.6" stroke-dasharray="21.4 6"></path>
<path d="M1415 876.5L1920 876.5" stroke="#000" stroke-width="2.6" stroke-dasharray="21.4 6"></path>
<path d="M1415 896.5L1920 896.5" stroke="#000" stroke-width="2.6" stroke-dasharray="21.4 6"></path>
<path d="M1415 886.3L1920 886.3" stroke="#000" stroke-width="2.8" stroke-dasharray="24 10.5 2.5 10.5"></path>
<rect x="1394.5" y="875.5" width="21" height="22" fill="#fff"></rect>
<clipPath id="c14"><rect x="1394.5" y="875.5" width="21" height="22"></rect></clipPath><g clip-path="url(#c14)">
<path d="M1363 897.5L1385 875.5M1372.5 897.5L1394.5 875.5M1382 897.5L1404 875.5M1391.5 897.5L1413.5 875.5M1401 897.5L1423 875.5M1410.5 897.5L1432.5 875.5M1420 897.5L1442 875.5" stroke="#000" stroke-width="2.6"></path>
</g>
<rect x="1394.5" y="875.5" width="21" height="22" stroke="#000" stroke-width="2.6"></rect>
<path d="M1598 751.2L1598 1031" stroke="#000" stroke-width="2" stroke-dasharray="39.8 3 1.5 3"></path>
<path d="M1693.8 700L1693.8 1031" stroke="#000" stroke-width="2.6" stroke-dasharray="21.4 6"></path>
<path d="M1714.5 700L1714.5 1031" stroke="#000" stroke-width="2.6" stroke-dasharray="21.4 6"></path>
<path d="M1704 751.2L1704 1031" stroke="#000" stroke-width="2.2" stroke-dasharray="39.8 3 1.5 3"></path>
<rect x="1693.8" y="876" width="20.7" height="21" fill="#fff"></rect>
<clipPath id="c15"><rect x="1693.8" y="876" width="20.7" height="21"></rect></clipPath><g clip-path="url(#c15)">
<path d="M1663.3 897L1684.3 876M1672.8 897L1693.8 876M1682.3 897L1703.3 876M1691.8 897L1712.8 876M1701.3 897L1722.3 876M1710.8 897L1731.8 876M1720.3 897L1741.3 876" stroke="#000" stroke-width="2.6"></path>
</g>
<rect x="1693.8" y="876" width="20.7" height="21" stroke="#000" stroke-width="2.6"></rect>
<rect x="1416" y="611" width="23" height="6.5" fill="#fff"></rect>
<clipPath id="c16"><rect x="1416" y="611" width="23" height="6.5"></rect></clipPath><g clip-path="url(#c16)">
<path d="M1404.5 617.5L1411 611M1409.5 617.5L1416 611M1414.5 617.5L1421 611M1419.5 617.5L1426 611M1424.5 617.5L1431 611M1429.5 617.5L1436 611M1434.5 617.5L1441 611M1439.5 617.5L1446 611" stroke="#000" stroke-width="1.2"></path>
</g>
<rect x="1416" y="611" width="23" height="6.5" stroke="#000" stroke-width="1.4"></rect>
<path d="M1439.3 611L1439.3 681.5" stroke="#000" stroke-width="1.6"></path>
<path d="M1439.300 681.500A66 66 0 0 0 1504 617.500" stroke="#000" stroke-width="1.600"></path>
<rect x="1504" y="611" width="10" height="6.500" fill="#333"></rect>
<text x="1469.5" y="542.5" font-size="18.5" text-anchor="middle" fill="#111">01</text>
<path d="M1470.8 547.5L1470.8 660" stroke="#000" stroke-width="1.6"></path>
<text x="1466" y="581" font-size="18.5" text-anchor="middle" fill="#111" transform="rotate(-90 1466 581)">1,00</text>
<text x="1491" y="581" font-size="18.5" text-anchor="middle" fill="#111" transform="rotate(-90 1491 581)">2,10</text>
<text x="1907.5" y="543" font-size="18.5" text-anchor="start" fill="#111">02</text>
<path d="M1918 547.5L1918 660" stroke="#000" stroke-width="1.6"></path>
<text x="1911" y="581" font-size="18.5" text-anchor="middle" fill="#111" transform="rotate(-90 1911 581)">1,00</text>
<path d="M1860 668A66 66 0 0 0 1919 617.500" stroke="#000" stroke-width="1.600"></path>
<path d="M1401 854L1472.5 854" stroke="#000" stroke-width="1.6"></path>
<path d="M1405 790A66 66 0 0 1 1472.500 854" stroke="#000" stroke-width="1.600"></path>
<path d="M1337.5 822.5L1450 822.5" stroke="#000" stroke-width="1.6"></path>
<text x="1387.5" y="815.5" font-size="18.5" text-anchor="end" fill="#111">1,00</text>
<text x="1387.5" y="844" font-size="18.5" text-anchor="end" fill="#111">2,10</text>
<text x="1333" y="822.5" font-size="18.5" text-anchor="middle" fill="#111" transform="rotate(-90 1333 822.5)">07</text>
<path d="M1025 468L1160 468" stroke="#000" stroke-width="1.8"></path>
<text x="1073.5" y="462" font-size="18.5" text-anchor="end" fill="#111">2,00</text>
<text x="1073.5" y="489" font-size="18.5" text-anchor="end" fill="#111">1,50</text>
<text x="1021.5" y="469" font-size="18.5" text-anchor="middle" fill="#111" transform="rotate(-90 1021.5 469)">21</text>
<path d="M1025 746.5L1160 746.5" stroke="#000" stroke-width="1.8"></path>
<text x="1073.5" y="740.5" font-size="18.5" text-anchor="end" fill="#111">2,00</text>
<text x="1073.5" y="767.5" font-size="18.5" text-anchor="end" fill="#111">1,50</text>
<text x="1021.5" y="747.5" font-size="18.5" text-anchor="middle" fill="#111" transform="rotate(-90 1021.5 747.5)">20</text>
<path d="M1025 1024.5L1160 1024.5" stroke="#000" stroke-width="1.8"></path>
<text x="1073.5" y="1018.5" font-size="18.5" text-anchor="end" fill="#111">2,00</text>
<text x="1073.5" y="1045.5" font-size="18.5" text-anchor="end" fill="#111">1,50</text>
<text x="1021.5" y="1025.5" font-size="18.5" text-anchor="middle" fill="#111" transform="rotate(-90 1021.5 1025.5)">19</text>
<text x="1250.7" y="248.3" font-size="17.5" text-anchor="middle" fill="#111">01</text>
<path d="M1252 252.5L1252 386" stroke="#000" stroke-width="1.6"></path>
<text x="1246.7" y="281.7" font-size="19" text-anchor="middle" fill="#111" transform="rotate(-90 1246.7 281.7)">2,00</text>
<text x="1273.7" y="281.7" font-size="19" text-anchor="middle" fill="#111" transform="rotate(-90 1273.7 281.7)">1,50</text>
<rect x="1299.500" y="381.500" width="33.500" height="16.500" stroke="#000" stroke-width="1.500" fill="#fff"></rect>
<ellipse cx="1310.500" cy="389.800" rx="5.500" ry="5" stroke="#000" stroke-width="1.700"></ellipse><ellipse cx="1322" cy="389.800" rx="5.500" ry="5" stroke="#000" stroke-width="1.700"></ellipse>
<path d="M1333 389.5L1424 389.5" stroke="#000" stroke-width="1.4"></path>
<text x="1186" y="424.5" font-size="24" text-anchor="start" fill="#111" font-weight="bold" textLength="79.5" lengthAdjust="spacingAndGlyphs">Offices</text>
<text x="1190" y="453.8" font-size="18" text-anchor="start" fill="#111" textLength="75.5" lengthAdjust="spacingAndGlyphs">31,24 m<tspan font-size="11.5" dy="-7">2</tspan></text>
<text x="1187" y="1013" font-size="24" text-anchor="start" fill="#111" font-weight="bold" textLength="79.5" lengthAdjust="spacingAndGlyphs">Offices</text>
<text x="1190" y="1042.5" font-size="18" text-anchor="start" fill="#111" textLength="75.5" lengthAdjust="spacingAndGlyphs">30,05 m<tspan font-size="11.5" dy="-7">2</tspan></text>
<g stroke="#000" stroke-width="1.500">
<rect x="1716" y="896" width="125" height="108" stroke-width="2"></rect>
<rect x="1734" y="931" width="86" height="71" stroke-width="1.800"></rect>
<path d="M1719 912h10v90h-10zM1723 912v90M1823 912h10v90h-10zM1827 912v90" stroke-width="1.300"></path>
<path d="M1748 897v34M1752 897v34M1802 897v34M1806 897v34M1742 914h6v10h-6zM1806 914h6v10h-6zM1752 919h50" stroke-width="1.300"></path>
<rect x="1769" y="910" width="17" height="9" fill="#000"></rect>
<path d="M1716 896l18 7 84 27 22 73" stroke-width="1.300"></path>
<path d="M1777 964v67" stroke-width="1.200"></path>
<path d="M1699 1008.500h37M1818 1008.500h37" stroke-width="6.500"></path><path d="M1716 1006h125" stroke-width="2"></path>
<path d="M1737 1018h14m-14 0l5-4m-5 4l5 4M1817 1018h-14m14 0l-5-4m5 4l-5 4" stroke-width="1.300"></path>
<path d="M1757 1031c0-5 10-5 10 0M1785 1031c0-5 10-5 10 0" stroke-width="1.400"></path>
</g>
<ellipse cx="1279" cy="755" rx="17" ry="6.500" transform="rotate(-28 1279 755)" fill="#000" opacity=".130"></ellipse>
<path d="M1265 772c-4-7.500-16.200-21-16.200-35.500a16.200 16.200 0 0 1 32.400 0c0 14.500-12.200 28-16.200 35.500z" fill="#0a8be6"></path>
<path d="M1265 772c-4-7.500-16.200-21-16.200-35.500a16.200 16.200 0 0 1 16.200-16.200z" fill="#0c7fd6"></path>
<circle cx="1265" cy="736.300" r="10.500" fill="#eee"></circle><circle cx="1265" cy="736.300" r="6.800" fill="#e0450f"></circle>
</g>
<rect x="634" y="244.300" width="78" height="38.300" rx="4" fill="#000" opacity=".130"></rect>
<rect x="635" y="245.4" width="35.4" height="35.8" rx="2.500" fill="#fff" stroke="#b9c8da" stroke-width="1"></rect>
<rect x="674.5" y="245.4" width="36.1" height="35.8" rx="2.500" fill="#fff" stroke="#b9c8da" stroke-width="1"></rect>
<rect x="728.500" y="244.300" width="38.600" height="38.300" rx="4" fill="#000" opacity=".130"></rect>
<rect x="729.5" y="245.4" width="36.1" height="35.8" rx="2.500" fill="#fff" stroke="#b9c8da" stroke-width="1"></rect>
<rect x="785.300" y="247.600" width="37.300" height="37" rx="4.500" fill="#fff" stroke="#a3b9d4" stroke-width="1.200"></rect>
<path d="M644.100 262.200h16.800M652.500 253.600v17.200M685 263.200h15" stroke="#000" stroke-width="3.500"></path>
<path d="M739.700 261.600v-5.500h5.500M749.800 256.100h5.500v5.500M755.300 265.500v5.500h-5.500M745.200 271h-5.500v-5.500" stroke="#000" stroke-width="3"></path>
<path d="M802.3 256.5L802.3 264.3L794.5 264.3ZM794.4 258.6L796.6 256.4L800.4 260.2L798.2 262.4ZM805.7 256.5L805.7 264.3L813.5 264.3ZM813.6 258.6L811.4 256.4L807.6 260.2L809.8 262.4ZM802.3 275.5L802.3 267.7L794.5 267.7ZM794.4 273.4L796.6 275.6L800.4 271.8L798.2 269.6ZM805.7 275.5L805.7 267.7L813.5 267.7ZM813.6 273.4L811.4 275.6L807.6 271.8L809.8 269.6Z" fill="#000"></path>
</svg>
<div class="abs" style="left:1833px;top:883px;width:62px;height:62px;border-radius:50%;background:#0a64c8;box-shadow:0 2px 6px rgba(0,0,0,.25)"></div>
<span class="t b" style="left: 1851.5px; font-size: 42px; color: rgb(255, 255, 255); top: 894px;">?</span>
<!-- collapse handle -->
<div class="abs" style="left:609px;top:605px;width:31px;height:56px;background:#edf1f6;border:1px solid #c3d0df;border-left:none;border-radius:0 7px 7px 0"></div>
<svg style="left:617px;top:624px" width="10" height="17" viewBox="0 0 10 17" fill="none" stroke="#222" stroke-width="1.800" stroke-linecap="round" stroke-linejoin="round"><path d="M8.500 1.200L1.500 8.500l7 7.300"></path></svg>

<!--/PLAN-->
<!--MENU-->
<div class="abs" style="left:1511px;top:208.500px;width:376.500px;height:555px;background:#fff;border:1px solid #cfd8e3;border-radius:5px;box-shadow:0 6px 16px rgba(0,0,0,.2),0 1px 3px rgba(0,0,0,.08)"></div>
<span class="t b" style="left: 1531px; font-size: 18px; letter-spacing: -1.14px; top: 226px;">Visibility (user)</span>
<div class="abs radio" style="left:1543.500px;top:275px"></div>
<span class="t" style="left: 1591.5px; font-size: 17.5px; letter-spacing: -0.11px; top: 277px;">Only me</span>
<div class="abs radio" style="left:1543.500px;top:325px"></div>
<span class="t" style="left: 1591.5px; font-size: 17.5px; letter-spacing: -0.29px; top: 327px;">In-house users</span>
<div class="abs row" style="top:360px;height:51px;background:#d3e5f5;border-bottom:1px solid #c5d6e8"></div>
<div class="abs radio on" style="left:1543.500px;top:375px"></div>
<span class="t" style="left: 1591.5px; font-size: 17.5px; letter-spacing: -0.33px; top: 377px;">All users</span>
<span class="t b" style="left: 1531px; font-size: 18px; letter-spacing: -0.96px; top: 427px;">Visibility (project)</span>
<div class="abs radio" style="left:1543.500px;top:476px"></div>
<span class="t" style="left: 1591.5px; font-size: 17.5px; letter-spacing: -0.09px; top: 467px;">This project</span>
<span class="t" style="left: 1591.5px; font-size: 14.5px; color: rgb(154, 154, 154); letter-spacing: 0.25px; top: 490.5px;">Office Complex 11</span>
<div class="abs row" style="top:511px;height:51px;background:#d3e5f5;border-bottom:1px solid #c5d6e8"></div>
<div class="abs radio on" style="left:1543.500px;top:526px"></div>
<span class="t" style="left: 1591.5px; font-size: 17.5px; letter-spacing: 0.04px; top: 528px;">All projects</span>
<span class="t b" style="left: 1531px; font-size: 18px; letter-spacing: -1.34px; top: 578px;">Misc</span>
<!-- pencil -->
<svg style="left:1531px;top:627px" width="20" height="20" viewBox="0 0 20 20"><path d="M0 20l1.300-5.800L12.500 3l4.500 4.500L5.800 18.700zM13.800 1.700l1-1c.9-.9 2.300-.9 3.200 0l1.300 1.300c.9.900.9 2.300 0 3.200l-1 1z" fill="#111"></path></svg>
<span class="t" style="left: 1564.5px; font-size: 17.5px; letter-spacing: -0.21px; top: 629px;">Rename filter</span>
<div class="abs row" style="top:662px;height:50.500px;background:#f2f2f2;border-bottom:1px solid #c9d6e4"></div>
<!-- clone -->
<svg style="left:1531px;top:677px" width="20" height="20" viewBox="0 0 20 20"><rect x="6" y="0" width="14" height="13.500" rx="2.500" fill="#111"></rect><path d="M3.500 5.500H3c-1.100 0-2 .9-2 2V17c0 1.100.9 2 2 2h9.500c1.100 0 2-.9 2-2v-.800" fill="none" stroke="#111" stroke-width="2"></path></svg>
<span class="t" style="left: 1564.5px; font-size: 17.5px; letter-spacing: -0.27px; top: 679px;">Save as new filter</span>
<!-- trash -->
<svg style="left:1531px;top:727px" width="18" height="21" viewBox="0 0 18 21"><path d="M6 0h6l1 1.800h4c.6 0 1 .4 1 1v.8H0v-.8c0-.6.400-1 1-1h4zM1.200 5.500h15.600l-.8 13.400c-.1 1.100-1 2-2.200 2H4.200c-1.100 0-2.100-.9-2.200-2z" fill="#f40d0d"></path><path d="M5.800 8.500v9M9 8.500v9M12.200 8.500v9" stroke="#fff" stroke-width="1.500"></path></svg>
<span class="t" style="left: 1562.5px; font-size: 17.5px; color: rgb(244, 13, 13); letter-spacing: 0.01px; top: 729.5px;">Delete Filter</span>
<!--/MENU-->
<!--ANNOT-->
<svg style="left:0;top:0" width="1920" height="1031" viewBox="0 0 1920 1031">
 <rect x="719" y="161.500" width="175" height="47" fill="none" stroke="#fd8204" stroke-width="4"></rect>
 <rect x="1846" y="163" width="50" height="44" fill="none" stroke="#fd8204" stroke-width="4"></rect>
 <rect x="1519" y="663" width="253" height="48.500" fill="none" stroke="#fd8204" stroke-width="4"></rect>
 <path d="M916 161.700L1796 159.400" stroke="#fd8204" stroke-width="7" fill="none"></path>
 <path d="M1792 143.500L1839 159.500 1792 175.500z" fill="#fd8204"></path>
 <path d="M1866.500 228L1764 610" stroke="#fd8204" stroke-width="7" fill="none"></path>
 <path d="M1746.500 598L1776.500 608 1749.500 649z" fill="#fd8204"></path>
 <circle cx="803.500" cy="144.500" r="14.500" fill="#fd8204"></circle>
 <circle cx="1874" cy="145.500" r="14.500" fill="#fd8204"></circle>
 <circle cx="1729.500" cy="687.500" r="14.500" fill="#fd8204"></circle>
 <g font-family="Liberation Sans, sans-serif" font-size="16" fill="#fff" text-anchor="middle">
  <text x="803" y="150">1</text><text x="1874" y="151">2</text><text x="1729.500" y="693">3</text>
 </g>
</svg>
<!--/ANNOT-->


</body></html>
